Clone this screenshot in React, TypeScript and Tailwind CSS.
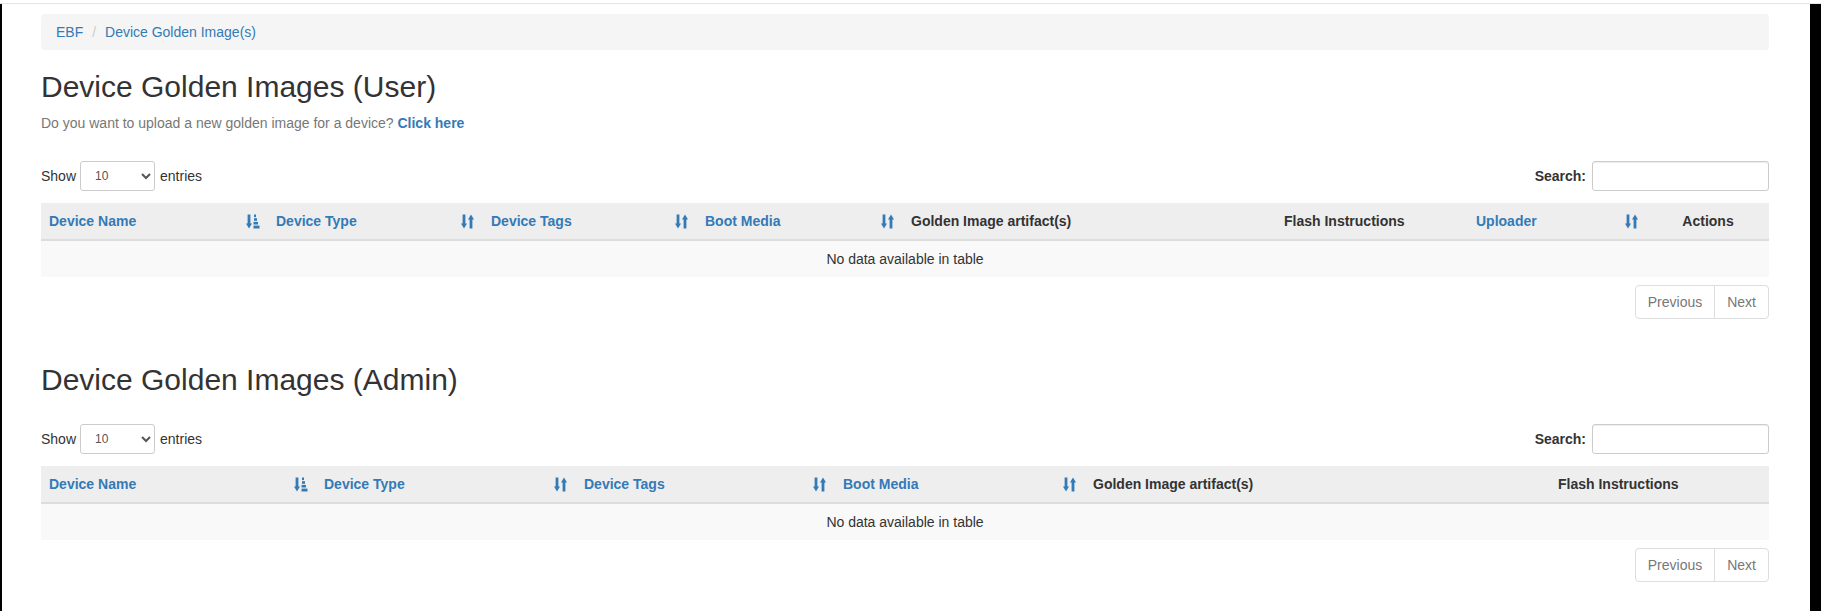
import React from "react";

const BLUE = "text-[#337ab7]";

function SortIcon() {
  return (
    <svg width="14" height="15" viewBox="0 0 14 15" className="shrink-0 fill-[#337ab7]">
      <rect x="1.6" y="0.5" width="2.8" height="10" />
      <polygon points="0,9.5 6,9.5 3,14.5" />
      <rect x="8.6" y="5" width="2.8" height="9.5" />
      <polygon points="7,5.5 13,5.5 10,0.5" />
    </svg>
  );
}

function SortAscIcon() {
  return (
    <svg width="14" height="15" viewBox="0 0 14 15" className="shrink-0 fill-[#337ab7]">
      <rect x="1.6" y="0.5" width="2.8" height="10" />
      <polygon points="0,9.5 6,9.5 3,14.5" />
      <rect x="8" y="0.5" width="2" height="2.6" />
      <rect x="8" y="4.2" width="3" height="2.6" />
      <rect x="7.5" y="7.9" width="4.5" height="2.6" />
      <rect x="7.5" y="11.6" width="6" height="2.9" />
    </svg>
  );
}

type Col = { label: string; w: string; sort?: "asc" | "both"; center?: boolean };

function DataTable({ cols }: { cols: Col[] }) {
  return (
    <div>
      <div className="flex items-center justify-between h-[30px]">
        <div className="flex items-center text-[14px] text-[#333]">
          <span>Show</span>
          <select className="ml-[4px] mr-[5px] h-[30px] w-[75px] rounded-[3px] border border-[#ccc] bg-white px-[10px] text-[12px] text-[#555]">
            <option>10</option>
            <option>25</option>
            <option>50</option>
            <option>100</option>
          </select>
          <span>entries</span>
        </div>
        <div className="flex items-center text-[14px] font-bold text-[#333]">
          <span>Search:</span>
          <input className="ml-[6px] h-[30px] w-[177px] rounded-[3px] border border-[#ccc] bg-white shadow-[inset_0_1px_1px_rgba(0,0,0,0.075)]" />
        </div>
      </div>
      <table className="mt-[12px] w-full table-fixed border-collapse text-[14px]">
        <thead>
          <tr className="bg-[#eeeeee]">
            {cols.map((c) => (
              <th
                key={c.label}
                className={`${c.w} border-b-2 border-[#ddd] p-[8px] font-bold leading-[20px] ${
                  c.sort ? BLUE : "text-[#333]"
                } ${c.center ? "text-center" : "text-left"}`}
              >
                {c.sort ? (
                  <div className="flex items-center justify-between">
                    <span>{c.label}</span>
                    {c.sort === "asc" ? <SortAscIcon /> : <SortIcon />}
                  </div>
                ) : (
                  <span>{c.label}</span>
                )}
              </th>
            ))}
          </tr>
        </thead>
        <tbody>
          <tr className="bg-[#f9f9f9]">
            <td colSpan={cols.length} className="border-t border-[#ddd] p-[8px] text-center leading-[20px] text-[#333]">
              No data available in table
            </td>
          </tr>
        </tbody>
      </table>
      <div className="mt-[8px] flex justify-end">
        <div className="flex text-[14px] leading-[20px] text-[#777]">
          <span className="rounded-l-[4px] border border-[#ddd] bg-white px-[12px] py-[6px]">Previous</span>
          <span className="-ml-px rounded-r-[4px] border border-[#ddd] bg-white px-[12px] py-[6px]">Next</span>
        </div>
      </div>
    </div>
  );
}

const userCols: Col[] = [
  { label: "Device Name", w: "w-[227px]", sort: "asc" },
  { label: "Device Type", w: "w-[215px]", sort: "both" },
  { label: "Device Tags", w: "w-[214px]", sort: "both" },
  { label: "Boot Media", w: "w-[206px]", sort: "both" },
  { label: "Golden Image artifact(s)", w: "w-[373px]" },
  { label: "Flash Instructions", w: "w-[192px]" },
  { label: "Uploader", w: "w-[179px]", sort: "both" },
  { label: "Actions", w: "w-[122px]", center: true },
];

const adminCols: Col[] = [
  { label: "Device Name", w: "w-[275px]", sort: "asc" },
  { label: "Device Type", w: "w-[260px]", sort: "both" },
  { label: "Device Tags", w: "w-[259px]", sort: "both" },
  { label: "Boot Media", w: "w-[250px]", sort: "both" },
  { label: "Golden Image artifact(s)", w: "w-[465px]" },
  { label: "Flash Instructions", w: "w-[219px]" },
];

export default function App() {
  return (
    <div className="h-[611px] w-full overflow-hidden bg-white font-['Liberation_Sans',Arial,sans-serif] text-[14px] text-[#333]">
      <div className="h-[4px] border-b border-[#e5e5e5]" />
      <div className="flex h-[607px]">
        <div className="w-[2px] bg-black" />
        <div className="flex-1 pl-[39px] pr-[41px] pt-[10px]">
          <div className="flex h-[36px] items-center rounded-[4px] bg-[#f5f5f5] px-[15px] leading-[20px]">
            <span className={BLUE}>EBF</span>
            <span className="ml-[4px] px-[5px] text-[#ccc]">/&nbsp;</span>
            <span className={BLUE}>Device Golden Image(s)</span>
          </div>
          <h2 className="mt-[20px] text-[30px] font-medium leading-[33px] text-[#333]">Device Golden Images (User)</h2>
          <p className="mt-[10px] leading-[20px] text-[#777]">
            Do you want to upload a new golden image for a device?{" "}
            <span className={`font-bold ${BLUE}`}>Click here</span>
          </p>
          <div className="mt-[28px]">
            <DataTable cols={userCols} />
          </div>
          <h2 className="mt-[44px] text-[30px] font-medium leading-[33px] text-[#333]">Device Golden Images (Admin)</h2>
          <div className="mt-[28px]">
            <DataTable cols={adminCols} />
          </div>
        </div>
        <div className="w-[11px] bg-black" />
      </div>
    </div>
  );
}
